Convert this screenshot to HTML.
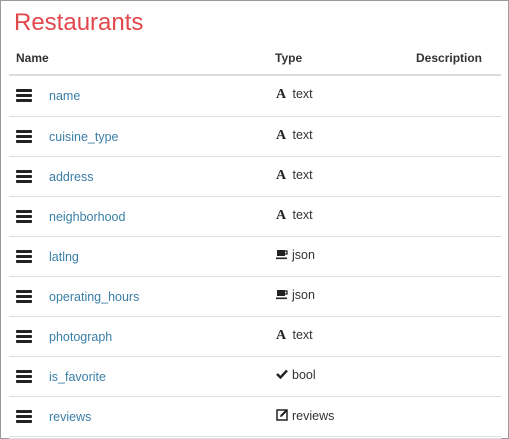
<!DOCTYPE html>
<html><head><style>
html,body{margin:0;padding:0;background:#fff}
body{width:507px;height:437px;border:1px solid #9a9a9a;position:relative;overflow:hidden;font-family:"Liberation Sans",sans-serif}
h1{position:absolute;left:13px;top:8px;margin:0;font-weight:normal;font-size:24px;color:#e2474b}
.hdr{position:absolute;top:50px;font-size:12px;font-weight:bold;color:#333}
.hl{position:absolute;left:8px;width:492px;top:73px;height:2px;background:#ddd}
.row{position:absolute;left:8px;width:492px;height:39px;border-bottom:1px solid #ddd}
.bars{position:absolute;left:7px;top:13px;width:16px}
.bars i{display:block;height:3px;background:#222;margin-bottom:2px;border-radius:1px}
.nm{position:absolute;left:40px;top:13px;font-size:12.5px;color:#3a7fa8}
.tp{position:absolute;left:267px;top:11px;font-size:12.5px;color:#333}
.ic{display:inline-block;width:13px;font-family:"Liberation Serif",serif;font-weight:bold;font-size:14px;color:#222}
</style></head><body>
<h1>Restaurants</h1>
<div class="hdr" style="left:15px">Name</div>
<div class="hdr" style="left:274px">Type</div>
<div class="hdr" style="left:415px">Description</div>
<div class="hl"></div>

<div class="row" style="top:75px;height:40px"><div class="bars"><i></i><i></i><i></i></div><div class="nm">name</div><div class="tp"><span class="ic">A</span> text</div></div>
<div class="row" style="top:116px"><div class="bars"><i></i><i></i><i></i></div><div class="nm">cuisine_type</div><div class="tp"><span class="ic">A</span> text</div></div>
<div class="row" style="top:156px"><div class="bars"><i></i><i></i><i></i></div><div class="nm">address</div><div class="tp"><span class="ic">A</span> text</div></div>
<div class="row" style="top:196px"><div class="bars"><i></i><i></i><i></i></div><div class="nm">neighborhood</div><div class="tp"><span class="ic">A</span> text</div></div>
<div class="row" style="top:236px"><div class="bars"><i></i><i></i><i></i></div><div class="nm">latlng</div><div class="tp"><svg width="12" height="11" viewBox="0 0 12 11" style="vertical-align:-1px;margin-right:4px"><rect x="1" y="1" width="8" height="6" fill="#222"/><rect x="8" y="2" width="3" height="3" fill="none" stroke="#222" stroke-width="1.3"/><rect x="0" y="8.5" width="11" height="1.6" fill="#222"/></svg>json</div></div>
<div class="row" style="top:276px"><div class="bars"><i></i><i></i><i></i></div><div class="nm">operating_hours</div><div class="tp"><svg width="12" height="11" viewBox="0 0 12 11" style="vertical-align:-1px;margin-right:4px"><rect x="1" y="1" width="8" height="6" fill="#222"/><rect x="8" y="2" width="3" height="3" fill="none" stroke="#222" stroke-width="1.3"/><rect x="0" y="8.5" width="11" height="1.6" fill="#222"/></svg>json</div></div>
<div class="row" style="top:316px"><div class="bars"><i></i><i></i><i></i></div><div class="nm">photograph</div><div class="tp"><span class="ic">A</span> text</div></div>
<div class="row" style="top:356px"><div class="bars"><i></i><i></i><i></i></div><div class="nm">is_favorite</div><div class="tp"><svg width="12" height="10" viewBox="0 0 12 10" style="vertical-align:0;margin-right:4px"><path d="M1 5 L4.5 8.5 L11 1.5" fill="none" stroke="#222" stroke-width="2.4"/></svg>bool</div></div>
<div class="row" style="top:396px;border-bottom:3px double #ddd"><div class="bars"><i></i><i></i><i></i></div><div class="nm">reviews</div><div class="tp"><svg width="13" height="13" viewBox="0 0 13 13" style="vertical-align:-1px;margin-right:3px"><rect x="1" y="2" width="10" height="10" fill="none" stroke="#222" stroke-width="1.5"/><path d="M4 9 L4.5 7 L10 1.5 L11.5 3 L6 8.5 Z" fill="#222"/></svg>reviews</div></div>
</body></html>
